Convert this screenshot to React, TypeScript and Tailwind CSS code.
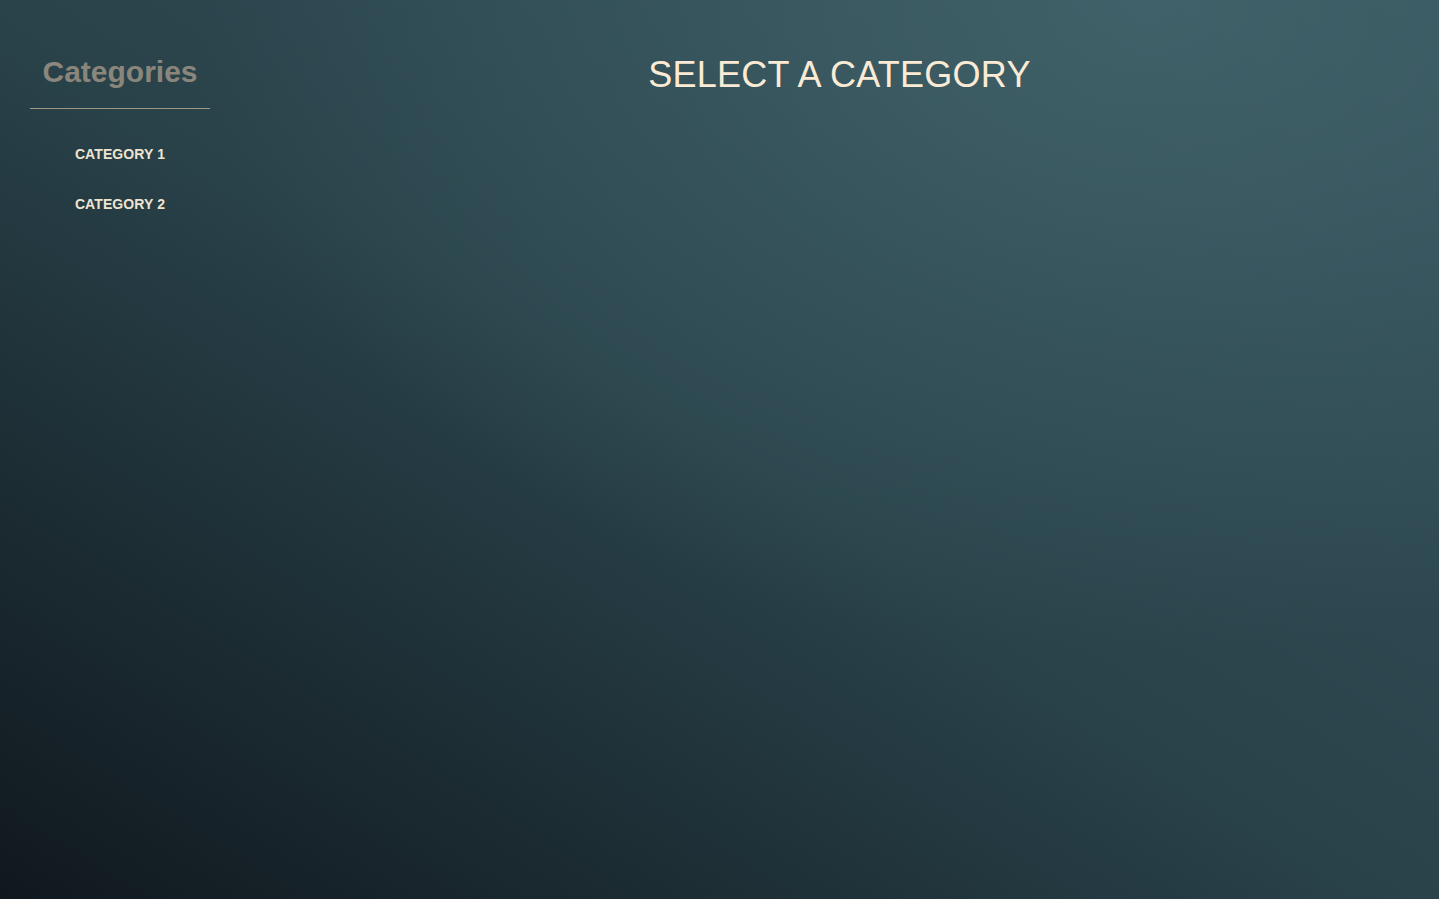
export default function App() {
  return (
    <div
      className="flex min-h-screen w-full bg-[#2a434b] bg-[image:radial-gradient(ellipse_950px_650px_at_80%_0%,rgba(72,108,115,0.65),rgba(72,108,115,0)),linear-gradient(to_top_right,#10181e_0%,#2a434b_50%,#34505a_100%)]"
      style={{ fontFamily: '"Liberation Sans", Arial, sans-serif' }}
    >
      <aside className="w-[240px] shrink-0 px-[30px] pt-[55px]">
        <h2 className="border-b border-[#9e9784] pb-[19px] text-center text-[30px] font-bold leading-[34px] text-[#8a867b]">
          Categories
        </h2>
        <ul className="mt-[20px]">
          {['CATEGORY 1', 'CATEGORY 2'].map((c) => (
            <li
              key={c}
              className="flex h-[50px] items-center justify-center text-[14px] font-bold leading-[16px] tracking-[0.1px] text-[#efe4d0]"
            >
              {c}
            </li>
          ))}
        </ul>
      </aside>
      <main className="flex-1 pt-[54px] text-center">
        <h1 className="text-[36px] font-normal leading-[41px] tracking-[0.25px] text-[#fbebd5]">SELECT A CATEGORY</h1>
      </main>
    </div>
  );
}
